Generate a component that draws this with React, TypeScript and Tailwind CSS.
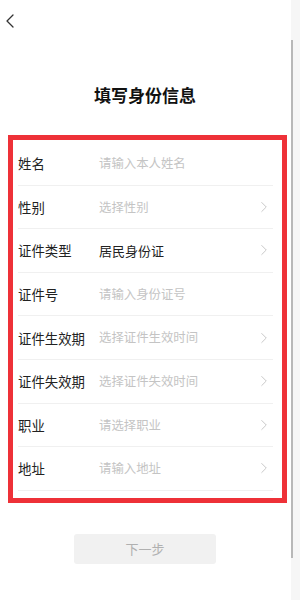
import { ChevronLeft, ChevronRight } from 'lucide-react';

type Row = {
  label: string;
  value: string;
  filled?: boolean;
  arrow?: boolean;
};

const rows: Row[] = [
  { label: '姓名', value: '请输入本人姓名' },
  { label: '性别', value: '选择性别', arrow: true },
  { label: '证件类型', value: '居民身份证', filled: true, arrow: true },
  { label: '证件号', value: '请输入身份证号' },
  { label: '证件生效期', value: '选择证件生效时间', arrow: true },
  { label: '证件失效期', value: '选择证件失效时间', arrow: true },
  { label: '职业', value: '请选择职业', arrow: true },
  { label: '地址', value: '请输入地址', arrow: true },
];

const FormRow = ({ row }: { row: Row }) => {
  return (
    <div className="flex flex-row items-center h-[43.6px] border-b border-[#f0f0f0]">
      <p className="w-[81px] shrink-0 text-[13.4px] text-[#222]">{row.label}</p>
      <p
        className={
          row.filled
            ? 'flex-1 text-[13px] text-[#222]'
            : 'flex-1 text-[12.4px] text-[#c4c4c4]'
        }
      >
        {row.value}
      </p>
      {row.arrow && (
        <ChevronRight size={18} strokeWidth={1.1} className="text-[#bdbdbd]" />
      )}
    </div>
  );
};

const App = () => {
  return (
    <div
      className="flex flex-row w-[300px] h-[600px] bg-white overflow-hidden"
      style={{ fontFamily: '"Noto Sans CJK SC", "Noto Sans", sans-serif' }}
    >
      <div className="flex flex-col w-[290px]">
        <div className="h-[46px] pt-[9px] pl-[0px]">
          <ChevronLeft size={24} strokeWidth={1.3} className="text-[#333] -ml-[2px]" />
        </div>
        <h1 className="mt-[37px] text-center text-[17px] font-bold text-[#111] leading-[24px]">
          填写身份信息
        </h1>
        <div className="mt-[28px] ml-[8px] w-[279px] h-[368px] border-[5px] border-[#ee3138] pt-[2px] pl-[5px] pr-[9px]">
          {rows.map((row) => (
            <FormRow key={row.label} row={row} />
          ))}
        </div>
        <button className="mt-[31px] ml-[74px] w-[142px] h-[30px] bg-[#f1f1f1] rounded-[3px] text-[13px] text-[#b0b0b0]">
          下一步
        </button>
      </div>
      <div className="flex flex-row w-[10px] bg-[#f6f6f6]">
        <div className="w-[1px] bg-white" />
        <div className="mt-[40px] w-[2px] h-[518px] bg-[#b8b8b8]" />
      </div>
    </div>
  );
};

export default App;
